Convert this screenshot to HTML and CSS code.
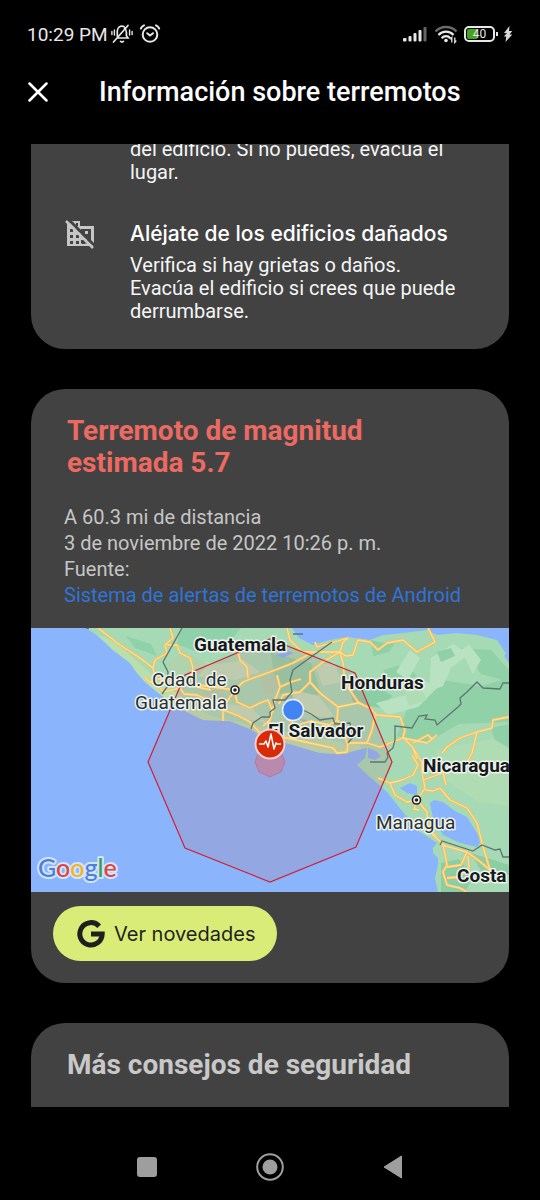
FILE: index.html
```html
<!DOCTYPE html>
<html lang="es">
<head>
    <meta charset="UTF-8">
    <meta name="viewport" content="width=device-width, initial-scale=1.0">
    <title>Información sobre terremotos</title>
    <link rel="stylesheet" href="styles.css">
</head>
<body>
    <div class="status-bar">
        <span class="clock">10:29 PM</span>
        <svg class="status-icon" width="22" height="22" viewBox="0 0 22 22" fill="none" stroke="#e8e8e8" stroke-width="1.7" stroke-linecap="round">
            <path d="M6 15h11l-1.600-2.300V9.500c0-2-.7-3.500-2-4.500M13 3.600C9.500 2 6.300 4.500 6.300 8v5M2.500 19 17 2.500M9.500 18.300c.8 1 2.200 1 3 0"/>
            <path d="M.9 8.500v3M3.400 7v5M18.600 7v5M21.100 8.500v3" stroke-width="1.400"/>
        </svg>
        <svg class="status-icon" width="22" height="22" viewBox="0 0 22 22" fill="none" stroke="#e8e8e8" stroke-width="2" stroke-linecap="round">
            <circle cx="11" cy="11.500" r="7.300"/>
            <path d="m8.200 10.200 2.800 2.300 3-2.300M1.800 5.500C2.500 4 3.500 3 5 2.300M20.200 5.500C19.500 4 18.500 3 17 2.300"/>
        </svg>
        <div class="status-right">
            <svg width="26" height="18" viewBox="0 0 26 18" fill="#e8e8e8">
                <rect x="1" y="13" width="3.500" height="3.500" rx="1"/>
                <rect x="6.500" y="11" width="3" height="5.500" rx="1"/>
                <rect x="11.500" y="8" width="3" height="8.500" rx="1"/>
                <rect x="16.500" y="5" width="3" height="11.500" rx="1"/>
                <rect x="21.500" y="2" width="3" height="14.500" rx="1" fill="#666"/>
            </svg>
            <svg width="24" height="20" viewBox="0 0 24 20" fill="none" stroke-width="2.300">
                <path d="M1.500 7.500C7 1.500 17 1.500 22.500 7.500" stroke="#6b6b6b"/>
                <path d="M4.500 11c4-4.500 11-4.500 15 0M7.700 14.200c2.300-2.700 6.300-2.700 8.600 0" stroke="#e8e8e8"/>
                <circle cx="12" cy="16.500" r="1.800" fill="#e8e8e8"/>
                <path d="M17.800 18.500v-5l-1.500 1.800M20.800 13.500v5l1.500-1.800" stroke="#e8e8e8" stroke-width="1.300"/>
            </svg>
            <div class="battery"><span>40</span></div>
            <svg width="10" height="18" viewBox="0 0 10 18" fill="#d8d8d8">
                <path d="M6.500 1 1 8h3L.8 11.500h2.400L2.500 17 9.300 9.500H6.500L9.300 6H6z"/>
            </svg>
        </div>
    </div>

    <header class="app-bar">
        <button class="close" aria-label="Cerrar">
            <svg width="20" height="20" viewBox="0 0 20 20" stroke="#fff" stroke-width="2.500" stroke-linecap="round">
                <path d="m1.500 1.500 17 17M18.500 1.500l-17 17"/>
            </svg>
        </button>
        <h1>Información sobre terremotos</h1>
    </header>

    <main>
        <section class="card card-tips">
            <div class="tip">
                <div class="tip-icon"></div>
                <p>del edificio. Si no puedes, evacúa el lugar.</p>
            </div>
            <div class="tip">
                <svg class="tip-icon" width="30" height="30" viewBox="0 0 30 30">
                    <path d="M2 3h4V1h9v5h14v20H2z" fill="#c6c6c6"/>
                    <path d="M16 9h10v14.500H16z" fill="#424242"/>
                    <path d="M5 9h3v3H5zM5 15h3v3H5zM5 21h3v3H5zM11 15h3v3h-3zM11 21h3v3h-3zM17 21h3v3h-3zM11 9h3v3h-3zM11 3h2v3h-2z" fill="#424242"/>
                    <path d="M20 11h3v3h-3zM16 18h6v2h-6z" fill="#c6c6c6"/>
                    <path d="m3-1 28 28" stroke="#424242" stroke-width="3"/>
                    <path d="m1 1 27 27" stroke="#c6c6c6" stroke-width="2.500"/>
                </svg>
                <div>
                    <h3>Aléjate de los edificios dañados</h3>
                    <p>Verifica si hay grietas o daños. Evacúa el edificio si crees que puede derrumbarse.</p>
                </div>
            </div>
        </section>

        <section class="card">
            <h2 class="alert-title">Terremoto de magnitud estimada 5.7</h2>
            <div class="details">
                <p>A 60.3 mi de distancia</p>
                <p>3 de noviembre de 2022 10:26 p. m.</p>
                <p>Fuente:</p>
                <a href="#">Sistema de alertas de terremotos de Android</a>
            </div>

            <svg class="map" viewBox="0 0 478 264" role="img" aria-label="Mapa del terremoto">
                <defs>
                    <clipPath id="land-clip">
                        <path id="land" d="M54 0 66 7 82 22 99 35 106 45 114 54 126 64 146 79 172 92 199 93 219 101 229 107 252 114 272 120 289 125 312 126 326 122 336 120 334 130 326 137 339 149 356 164 372 184 386 202 406 215 402 220 402 225 407 230 407 237 404 250 407 264H478V30L466 12 446 7 426 5 406 7 396 2 372 5 352 7 339 12 316 9 299 12 282 17 268 10 261 0z"/>
                    </clipPath>
                    <g id="roads">
                        <path d="M67 0 89 17 109 30 122 40 124 32 136 25 134 17 142 10 139 0M136 17 146 17 149 25 159 30 162 40 159 49 166 59 180 62"/>
                        <path d="M114 50 119 54 126 55 132 64 149 60 153 66 166 67 177 72M122 40 124 50 132 52 150 55 175 58 204 62 212 54 222 50 239 44 262 35 282 24"/>
                        <path d="M204 62 197 72 192 82 192 93M207 24 209 32 216 39 217 50M204 64 206 74 219 80 229 75 237 72 242 84M192 82 206 87 219 94 229 105 256 110 279 115 302 120 306 125 316 124 317 115 336 115 349 119 372 110 396 115 406 107"/>
                        <path d="M256 0 259 12 271 24 290 24 309 24 312 14 317 10 300 15 286 19 284 14M309 24 315 28 322 27 327 12 339 14 347 22 356 15 372 12 386 24 404 14 397 0"/>
                        <path d="M309 24 292 34 279 44 279 54 269 64 252 67 248 76M309 24 312 35 314 55 327 74 336 79M279 54 289 65 307 79 327 75 339 80 346 87 369 89 374 102 372 109 382 120 386 131"/>
                        <path d="M307 79 306 92 298 97 280 93 266 97M306 92 311 97 316 115M246 47 249 59 244 72 239 92 232 98M336 115 341 102 344 87M249 59 260 54 270 51M256 91 266 97 272 105"/>
                        <path d="M478 89 462 92 461 100 446 104 429 110 416 119 411 125M446 104 441 125 436 134M382 115 397 107 401 111M381 127 387 137 382 147 371 152 359 155 347 150"/>
                        <path d="M359 155 364 167 376 174 386 172M382 120 391 134 391 144 394 160 386 172 396 184 396 194 402 207 412 216 416 237 412 244 416 257 429 260 436 264M394 162 402 163 409 160 419 172 436 180 446 195 451 215 459 242"/>
                        <path d="M392 152 412 145 415 157M411 217 436 224 430 237 416 239M436 224 447 232 459 242M437 228 438 240 428 249 416 250M386 172 383 181 388 182M398 202 405 208"/>
                    </g>
                </defs>

                <rect width="478" height="264" fill="#8ab4fb"/>
                <use href="#land" fill="#a5dab5"/>

                <!-- terrain -->
                <g clip-path="url(#land-clip)">
                    <path d="M50 0 85 14 130 55 180 88 225 98 330 118 330 130 230 118 110 65z" fill="#b9dfad"/>
                    <path d="M150 0h60l-8 10-22 2-14 12-20-8zM95 8l25 8 6 12-22-8zM240 25l40 10 10 30-20 10-25-12z" fill="#8fd2a9"/>
                    <path d="M380 70l30-18 40 6 28-8v44l-50 2-34 20-28-8zM352 42l22-6 12 12-26 8zM430 20l30 2 18 20v12l-28-8z" fill="#90d1a8"/>
                    <path d="M318 62l25-6 18 12-10 12-28-4zM410 235l18-4 14 18-8 15h-24zM440 225l38 12v10l-28-4z" fill="#8bcda5"/>
                    <path d="M155 30l30 6 28-4 16 12-24 8-44-4-16-8zM190 75l30 4 16 16-32-6zM262 62l26 6 16 22-24-2-18-10zM284 38l20-4 6 20-18 4z" fill="#bfdfba"/>
                    <path d="M365 44l14-22 10 8-12 22zM400 30l22-14 16 10-18 14-8 18-14 6zM345 75l30-8 18-14 14 6-20 20-30 8zM430 22l8-6 12 16-8 14z" fill="#b8e2c2"/>
                    <path d="M404 122l74-14v70l-30-4-34-22zM372 60l18 0 6 12-18 6z" fill="#b0dcb4"/>
                    <path d="M135 34l20-10 22 12-10 12-24-2zM172 60l18 2 10 14-22-2zM230 50l14-4 4 16-14 6z" fill="#b0d3ac"/>
                    <path d="M340 12l18 4 8-4-8 12-16 4zM406 24l14-4 4 8-14 6zM460 100l18-4v24l-14-8z" fill="#8fd0a7"/>
                </g>

                <!-- lakes -->
                <path d="M369 160 379 155 386 158 386 166 384 167 376 165zM399 175 403 172 412 174 424 183 436 189 447 207 449 215 446 219 429 215 412 207 402 190zM244 27 258 23 262 25 252 30zM337 120 345 123 350 128 344 132 337 130z" fill="#8ab4fb"/>
                <path d="M478 22l-5 6 5 7zM269 91l7 1-2 3z" fill="#8ab4fb"/>

                <!-- estimated reach -->
                <path d="M239 11 324 45 361 134 325 219 239 254 154 220 117 134 154 47z" fill="#b8747f" fill-opacity=".19"/>

                <use href="#roads" class="road-edge"/>
                <use href="#roads" class="road"/>
                <path class="border" d="M151 0 132 34 137 44 136 59 131 66M239 89 231 89 222 95 220 101M301 14 262 42 259 52 261 64 254 72 242 72 244 80 239 84 239 89M262 6h10M272 82 280 86 289 92 302 90 304 96 319 95 322 109 317 115"/>
                <path class="border" d="M478 55 472 55 469 61 452 60 446 54 436 64 429 70 430 76 427 79 406 97 404 92 394 91 396 87 388 88 381 100 364 98 364 112 362 120 356 125 357 129 354 134 339 134M409 217 411 213 442 223 451 217 464 222 469 221 472 229 478 229M55 0l3 1"/>

                <path d="M239 11 324 45 361 134 325 219 239 254 154 220 117 134 154 47z" fill="none" stroke="#cf2236" stroke-width="1.200"/>
                <path d="M239 119l11 4 4 11-4 10-11 5-11-5-4-10 4-11z" fill="#b98aae" stroke="#b8697f" stroke-width=".6"/>

                <g class="capital">
                    <circle cx="204" cy="62" r="4"/>
                    <circle cx="385.500" cy="172" r="4"/>
                </g>
                <circle cx="204" cy="62" r="1.800" fill="#222"/>
                <circle cx="385.500" cy="172" r="1.800" fill="#222"/>

                <g class="place">
                    <text class="country" x="163" y="23">Guatemala</text>
                    <text x="121" y="58">Cdad. de</text>
                    <text x="104" y="81">Guatemala</text>
                    <text class="country" x="310" y="61">Honduras</text>
                    <text class="country" x="237" y="109">El Salvador</text>
                    <text class="country" x="392" y="144">Nicaragua</text>
                    <text x="345" y="201">Managua</text>
                    <text class="country" x="426" y="254">Costa</text>
                </g>

                <circle cx="262" cy="82" r="10.500" fill="#4284f3" stroke="#e5eefb" stroke-width="1.500"/>
                <circle cx="239" cy="116" r="14.500" fill="#d92b07" stroke="#e8d3d0" stroke-width="2"/>
                <path d="M228 116h5l2-3 2 6 3-13 3 15 2-6 1 1h4" fill="none" stroke="#fff" stroke-width="1.500" stroke-linejoin="round"/>

                <text class="google" x="7" y="249"><tspan fill="#4a80dc">G</tspan><tspan fill="#dc4437">o</tspan><tspan fill="#f0b51e">o</tspan><tspan fill="#4a80dc">g</tspan><tspan fill="#33a055">l</tspan><tspan fill="#dc4437">e</tspan></text>
            </svg>

            <div class="actions">
                <button class="news-button">
                    <svg width="28" height="28" viewBox="0 0 28 28" fill="none" stroke="#1f1f1f" stroke-width="5">
                        <path d="M22.200 6.200A11.200 11.200 0 1 0 25.200 14H14"/>
                    </svg>
                    Ver novedades
                </button>
            </div>
        </section>

        <section class="card card-more">
            <h2>Más consejos de seguridad</h2>
        </section>
    </main>

    <nav class="nav-bar">
        <button aria-label="Recientes">
            <svg width="28" height="28" viewBox="0 0 28 28"><rect x="4" y="4" width="20" height="20" rx="3" fill="#9e9e9e"/></svg>
        </button>
        <button aria-label="Inicio">
            <svg width="28" height="28" viewBox="0 0 28 28">
                <circle cx="14" cy="14" r="12.800" fill="none" stroke="#9e9e9e" stroke-width="2"/>
                <circle cx="14" cy="14" r="7.500" fill="#9e9e9e"/>
            </svg>
        </button>
        <button aria-label="Atrás">
            <svg width="28" height="28" viewBox="0 0 28 28"><path d="M5 14 22.500 3v22z" fill="#9e9e9e" stroke="#9e9e9e" stroke-linejoin="round"/></svg>
        </button>
    </nav>
</body>
</html>
```
FILE: styles.css
```css
* {
    box-sizing: border-box;
}
body {
    margin: 0;
    height: 100vh;
    display: flex;
    flex-direction: column;
    background-color: #000;
    color: #f5f5f5;
    font-family: Roboto, Arial, sans-serif;
}
h1, h2, h3, p {
    margin: 0;
}
button {
    background: none;
    border: none;
    padding: 0;
    cursor: pointer;
    font-family: inherit;
}
svg {
    display: block;
    flex-shrink: 0;
}

/* status bar */
.status-bar {
    display: flex;
    align-items: center;
    gap: 6px;
    height: 68px;
    padding: 0 27px;
}
.clock {
    font-size: 19px;
    color: #e8e8e8;
    margin-right: -3px;
}
.status-right {
    display: flex;
    align-items: center;
    gap: 6px;
    margin-left: auto;
}
.battery {
    position: relative;
    width: 31px;
    height: 16px;
    margin-right: 2px;
    border: 2px solid #e8e8e8;
    border-radius: 5px;
    background: linear-gradient(to right, #43a51c 40%, #000 40%);
    background-clip: content-box;
    padding: 1px;
    color: #e8e8e8;
    font-size: 12px;
    line-height: 11px;
    text-align: center;
}
.battery::after {
    content: "";
    position: absolute;
    right: -5px;
    top: 4px;
    width: 2px;
    height: 4px;
    background-color: #e8e8e8;
}

/* header */
.app-bar {
    display: flex;
    align-items: center;
    gap: 51px;
    height: 76px;
    padding: 0 28px 28px;
}
.app-bar h1 {
    font-size: 27px;
    font-weight: 500;
    line-height: 32px;
    color: #fff;
}

main {
    flex: 1;
    min-height: 0;
    overflow: hidden;
    display: flex;
    flex-direction: column;
    gap: 40px;
    padding: 0 31px;
}
.card {
    flex-shrink: 0;
    background-color: #424242;
    border-radius: 34px;
    overflow: hidden;
}

/* tips */
.card-tips {
    margin-top: -6px;
    padding: 0 48px 26px 34px;
    display: flex;
    flex-direction: column;
    gap: 36px;
    border-radius: 0 0 34px 34px;
}
.tip {
    display: flex;
    gap: 35px;
}
.tip-icon {
    width: 30px;
    flex-shrink: 0;
}
.tip p {
    font-size: 20px;
    line-height: 23px;
}
.tip h3 {
    font-family: Inter, sans-serif;
    font-size: 21px;
    font-weight: 500;
    line-height: 28px;
    margin-bottom: 6px;
    color: #fff;
    white-space: nowrap;
}

/* earthquake */
.card h2 {
    padding: 26px 36px 0;
    font-size: 28px;
    font-weight: 700;
    line-height: 32px;
}
.card .alert-title {
    padding-right: 120px;
    color: #ec6a62;
}
.details {
    padding: 25px 33px 20px;
    font-size: 20px;
    line-height: 26px;
    color: #c6c6c6;
}
.details a {
    display: block;
    color: #2f74d8;
    text-decoration: none;
}

.map {
    width: 100%;
    height: auto;
}
.road-edge {
    fill: none;
    stroke: #f5bd62;
    stroke-width: 2.8px;
    stroke-linejoin: round;
}
.road {
    fill: none;
    stroke: #ffe08e;
    stroke-width: 1.3px;
    stroke-linejoin: round;
}
.border {
    fill: none;
    stroke: #5f7570;
    stroke-width: 1.3px;
}
.capital {
    fill: #fff;
    stroke: #222;
    stroke-width: 1.6px;
}
.place {
    font-size: 19px;
    fill: #2a3032;
    stroke: #eef3ee;
    stroke-width: 3px;
    stroke-linejoin: round;
    paint-order: stroke;
}
.country {
    font-weight: 700;
    fill: #171a1b;
}
.google {
    font-family: Lato, sans-serif;
    font-size: 25px;
    font-weight: 500;
    stroke: #d3e3fb;
    stroke-width: 4px;
    stroke-linejoin: round;
    paint-order: stroke;
}

.actions {
    padding: 14px 22px 22px;
}
.news-button {
    display: flex;
    align-items: center;
    gap: 9px;
    height: 55px;
    padding: 0 22px 0 24px;
    border-radius: 28px;
    background-color: #d9ec78;
    color: #1f1f1f;
    font-family: Inter, sans-serif;
    font-size: 20px;
}

.card-more {
    padding-bottom: 60px;
    color: #c8c8c8;
}

/* system navigation */
.nav-bar {
    display: flex;
    justify-content: space-around;
    align-items: center;
    height: 93px;
    padding: 27px 86px 0;
}
```
